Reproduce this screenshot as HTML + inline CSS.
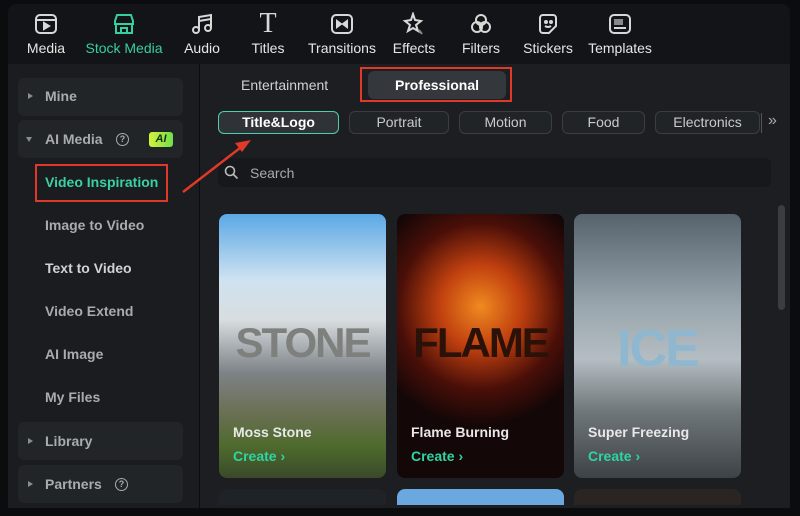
<!DOCTYPE html>
<html><head><meta charset="utf-8"><style>
*{margin:0;padding:0;box-sizing:border-box}
body{width:800px;height:516px;background:#0b0c0d;position:relative;overflow:hidden;font-family:"Liberation Sans",sans-serif}
.abs{position:absolute}
.top{left:8px;top:4px;width:782px;height:60px;background:#121417;border-radius:8px 8px 0 0}
.tab{position:absolute;top:40px;font-size:14px;color:#e6e6e6;transform:translateX(-50%);white-space:nowrap}
.ic{position:absolute;top:12px;transform:translateX(-50%)}
.side{left:8px;top:64px;width:191px;height:444px;background:#1a1c1f}
.main{left:200px;top:64px;width:590px;height:444px;background:#1c1e21}
.box{position:absolute;left:18px;width:165px;height:38px;background:#222528;border-radius:6px}
.lbl{position:absolute;font-size:14px;font-weight:bold;color:#a9acaf}
.tri{position:absolute;left:28px;width:0;height:0;border-top:3.5px solid transparent;border-bottom:3.5px solid transparent;border-left:5px solid #8a8d90}
.chip{position:absolute;top:111px;height:23px;border:1px solid #3a3d41;border-radius:6px;background:#212427;color:#c8cacc;font-size:14px;text-align:center;line-height:21px}
.card{position:absolute;top:214px;width:167px;height:264px;border-radius:8px;overflow:hidden}
.ct{position:absolute;left:14px;top:210px;font-size:14px;font-weight:bold;color:#e8e8e8}
.cc{position:absolute;left:14px;top:234px;font-size:14px;font-weight:bold;color:#2fd4a3}
.big{position:absolute;width:100%;text-align:center;top:105px;font-size:42px;font-weight:bold;font-family:"Liberation Sans",sans-serif;letter-spacing:-2px}
</style></head><body>
<div class="abs top"></div>
<svg class="ic" style="left:46px" width="24" height="24" viewBox="0 0 24 24" fill="none" stroke="#d8d8d8" stroke-width="2"><rect x="2" y="3" width="20" height="18" rx="4"/><line x1="2" y1="8" x2="22" y2="8"/><path d="M10 11l5 3-5 3z" fill="#d8d8d8"/></svg>
<svg class="ic" style="left:124px" width="24" height="24" viewBox="0 0 24 24" fill="none" stroke="#36cfa0" stroke-width="2"><path d="M3 9l2-6h14l2 6v3H3z"/><path d="M4 12v9h16v-9"/><path d="M9 21v-5h6v5"/></svg>
<svg class="ic" style="left:202px" width="24" height="24" viewBox="0 0 24 24" fill="none" stroke="#d8d8d8" stroke-width="2"><circle cx="6" cy="18" r="3"/><circle cx="18" cy="16" r="3"/><path d="M9 18V5l12-2v13"/><path d="M9 9l12-2"/></svg>
<div class="abs" style="left:268px;top:8px;transform:translateX(-50%);font-family:'Liberation Serif',serif;font-size:28px;color:#d8d8d8">T</div>
<svg class="ic" style="left:342px" width="24" height="24" viewBox="0 0 24 24" fill="none" stroke="#d8d8d8" stroke-width="2"><rect x="2" y="3" width="20" height="18" rx="4"/><path d="M7 9l4 3-4 3zM17 9l-4 3 4 3z" fill="#d8d8d8"/></svg>
<svg class="ic" style="left:414px" width="24" height="24" viewBox="0 0 24 24" fill="none" stroke="#d8d8d8" stroke-width="2"><path d="M11 2l2 6 6 1-5 4 2 6-5-3-5 3 2-6-5-4 6-1z"/><path d="M17 18l3 4" stroke="#888"/></svg>
<svg class="ic" style="left:481px" width="24" height="24" viewBox="0 0 24 24" fill="none" stroke="#d8d8d8" stroke-width="2"><circle cx="12" cy="8" r="5"/><circle cx="8" cy="15" r="5"/><circle cx="16" cy="15" r="5"/></svg>
<svg class="ic" style="left:548px" width="24" height="24" viewBox="0 0 24 24" fill="none" stroke="#d8d8d8" stroke-width="2"><path d="M4 6a3 3 0 013-3h10a3 3 0 013 3v8l-7 7H7a3 3 0 01-3-3z"/><circle cx="10" cy="10" r="1" fill="#d8d8d8"/><circle cx="15" cy="10" r="1" fill="#d8d8d8"/><path d="M9 14q3 2 6 0"/></svg>
<svg class="ic" style="left:620px" width="24" height="24" viewBox="0 0 24 24" fill="none" stroke="#d8d8d8" stroke-width="2"><rect x="2" y="3" width="20" height="18" rx="4"/><rect x="6" y="7" width="9" height="6" fill="#888" stroke="none"/><line x1="6" y1="16" x2="18" y2="16"/></svg>
<div class="tab" style="left:46px">Media</div>
<div class="tab" style="left:124px;color:#36cfa0">Stock Media</div>
<div class="tab" style="left:202px">Audio</div>
<div class="tab" style="left:268px">Titles</div>
<div class="tab" style="left:342px">Transitions</div>
<div class="tab" style="left:414px">Effects</div>
<div class="tab" style="left:481px">Filters</div>
<div class="tab" style="left:548px">Stickers</div>
<div class="tab" style="left:620px">Templates</div>

<div class="abs side"></div>
<div class="box" style="top:78px"></div><div class="tri" style="top:93px"></div><div class="lbl" style="left:45px;top:88px">Mine</div>
<div class="box" style="top:120px"></div>
<div class="abs" style="left:26px;top:137px;border-left:3.5px solid transparent;border-right:3.5px solid transparent;border-top:5px solid #8a8d90"></div>
<div class="lbl" style="left:45px;top:131px">AI Media</div>
<div class="abs" style="left:116px;top:133px;width:13px;height:13px;border:1.5px solid #a9acaf;border-radius:50%;font-size:9px;color:#a9acaf;text-align:center;line-height:10px;font-weight:bold">?</div>
<div class="abs" style="left:149px;top:132px;width:24px;height:15px;background:linear-gradient(90deg,#d6f23a,#6fe04a);border-radius:3px;font-size:11px;font-weight:bold;font-style:italic;color:#143018;text-align:center;line-height:15px">AI</div>
<div class="lbl" style="left:45px;top:174px;color:#3ad1a5">Video Inspiration</div>
<div class="abs" style="left:35px;top:164px;width:133px;height:38px;border:2px solid #e0392a"></div>
<div class="lbl" style="left:45px;top:217px">Image to Video</div>
<div class="lbl" style="left:45px;top:260px;color:#d0d2d4">Text to Video</div>
<div class="lbl" style="left:45px;top:303px">Video Extend</div>
<div class="lbl" style="left:45px;top:346px">AI Image</div>
<div class="lbl" style="left:45px;top:389px">My Files</div>
<div class="box" style="top:422px"></div><div class="tri" style="top:438px"></div><div class="lbl" style="left:45px;top:433px">Library</div>
<div class="box" style="top:465px"></div><div class="tri" style="top:481px"></div><div class="lbl" style="left:45px;top:476px">Partners</div>
<div class="abs" style="left:115px;top:478px;width:13px;height:13px;border:1.5px solid #a9acaf;border-radius:50%;font-size:9px;color:#a9acaf;text-align:center;line-height:10px;font-weight:bold">?</div>

<div class="abs main"></div>
<div class="abs" style="left:241px;top:77px;font-size:14px;color:#cfd1d3">Entertainment</div>
<div class="abs" style="left:368px;top:71px;width:138px;height:28px;background:#34373b;border-radius:6px;color:#fff;font-size:14px;font-weight:bold;text-align:center;line-height:28px">Professional</div>
<div class="abs" style="left:360px;top:67px;width:152px;height:35px;border:2px solid #e0392a"></div>
<div class="chip" style="left:218px;width:121px;border-color:#4ccfae;background:#2f3236;color:#fff;font-weight:bold">Title&amp;Logo</div>
<div class="chip" style="left:349px;width:100px">Portrait</div>
<div class="chip" style="left:459px;width:93px">Motion</div>
<div class="chip" style="left:562px;width:83px">Food</div>
<div class="chip" style="left:655px;width:105px">Electronics</div>
<div class="abs" style="left:761px;top:113px;width:1px;height:20px;background:#555"></div>
<div class="abs" style="left:768px;top:112px;font-size:16px;color:#aaa">»</div>
<div class="abs" style="left:218px;top:158px;width:553px;height:29px;background:#16181b;border-radius:6px"></div>
<svg class="abs" style="left:224px;top:165px" width="15" height="15" viewBox="0 0 15 15" fill="none" stroke="#bbb" stroke-width="1.6"><circle cx="6" cy="6" r="4.5"/><line x1="9.5" y1="9.5" x2="13.5" y2="13.5"/></svg>
<div class="abs" style="left:250px;top:165px;font-size:14px;color:#a8aaad">Search</div>
<svg class="abs" style="left:0;top:0" width="800" height="516"><line x1="183" y1="192" x2="240" y2="148" stroke="#e0392a" stroke-width="2.5"/><path d="M251 140l-16 3 7 9z" fill="#e0392a"/></svg>
<div class="abs" style="left:778px;top:205px;width:7px;height:105px;background:#3a3d41;border-radius:4px"></div>

<div class="card" style="left:219px;background:linear-gradient(180deg,#5ba8e6 0%,#cfe2f0 25%,#d8dde0 40%,#7d8387 60%,#6b7055 75%,#4e6a2c 88%,#3a4a2a 100%)"><div class="big" style="color:#7d807c">STONE</div><div class="ct">Moss Stone</div><div class="cc">Create ›</div></div>
<div class="card" style="left:397px;background:radial-gradient(ellipse 70% 45% at 50% 35%,#f08a20 0%,#c0400f 35%,#4a0f08 70%,#140707 100%),#140707"><div class="big" style="color:#2a1208">FLAME</div><div class="ct">Flame Burning</div><div class="cc">Create ›</div></div>
<div class="card" style="left:574px;background:linear-gradient(180deg,#56626c 0%,#9aa6ae 35%,#b4bdc2 55%,#6f767a 75%,#3d4246 100%)"><div class="big" style="color:#8fb8d0;font-size:52px">ICE</div><div class="ct">Super Freezing</div><div class="cc">Create ›</div></div>
<div class="abs" style="left:219px;top:489px;width:167px;height:16px;background:#1f2226;border-radius:8px 8px 0 0"></div>
<div class="abs" style="left:397px;top:489px;width:167px;height:16px;background:#6aa8df;border-radius:8px 8px 0 0"></div>
<div class="abs" style="left:574px;top:489px;width:167px;height:16px;background:#2a2522;border-radius:8px 8px 0 0"></div>
</body></html>
